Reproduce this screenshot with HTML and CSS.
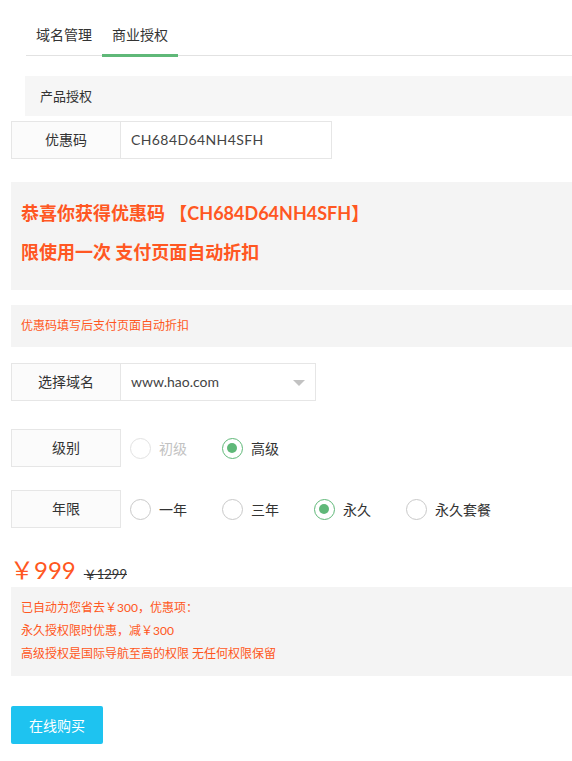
FILE: index.html
```html
<!DOCTYPE html>
<html lang="zh-CN">
<head>
    <meta charset="UTF-8">
    <title>商业授权</title>
    <link rel="stylesheet" href="styles.css">
</head>
<body>
    <ul class="tab-title">
        <li>域名管理</li>
        <li class="this">商业授权</li>
    </ul>

    <div class="panel-head">产品授权</div>

    <div class="form-item first">
        <label class="form-label">优惠码</label>
        <div class="form-input code-input">CH684D64NH4SFH</div>
    </div>

    <div class="coupon-box">
        <p>恭喜你获得优惠码 【CH684D64NH4SFH】</p>
        <p>限使用一次 支付页面自动折扣</p>
    </div>

    <div class="tip-box">优惠码填写后支付页面自动折扣</div>

    <div class="form-item domain">
        <label class="form-label">选择域名</label>
        <div class="form-input select-input">
            <span>www.hao.com</span>
            <i class="edge"></i>
        </div>
    </div>

    <div class="form-item level">
        <label class="form-label">级别</label>
        <div class="radio-group">
            <div class="radio disabled"><i></i><span>初级</span></div>
            <div class="radio checked"><i></i><span>高级</span></div>
        </div>
    </div>

    <div class="form-item years">
        <label class="form-label">年限</label>
        <div class="radio-group">
            <div class="radio"><i></i><span>一年</span></div>
            <div class="radio"><i></i><span>三年</span></div>
            <div class="radio checked"><i></i><span>永久</span></div>
            <div class="radio"><i></i><span>永久套餐</span></div>
        </div>
    </div>

    <div class="price-row">
        <span class="price">￥999</span>
        <del class="old-price">￥1299</del>
    </div>

    <div class="note-box">
        <p>已自动为您省去￥300，优惠项：</p>
        <p>永久授权限时优惠，减￥300</p>
        <p>高级授权是国际导航至高的权限 无任何权限保留</p>
    </div>

    <button class="buy-btn">在线购买</button>
</body>
</html>
```

FILE: styles.css
```css
body {
    margin: 0;
    padding: 0 0 20px 11px;
    font-family: 'Lato', 'Noto Sans CJK SC', sans-serif;
    font-size: 14px;
    color: #333;
    background-color: #fff;
}

p {
    margin: 0;
}

/* onglets */
.tab-title {
    display: flex;
    list-style: none;
    margin: 15px 0 0 15px;
    padding: 0;
    height: 40px;
    border-bottom: 1px solid #e2e2e2;
}

.tab-title li {
    position: relative;
    padding: 0 10px;
    line-height: 40px;
    color: #333;
}

.tab-title li.this::after {
    content: '';
    position: absolute;
    left: 0;
    right: 0;
    bottom: -2px;
    height: 3px;
    background-color: #5fb878;
}

.panel-head {
    margin: 20px 0 0 14px;
    height: 40px;
    line-height: 40px;
    padding-left: 15px;
    background-color: #f6f6f6;
    font-size: 13px;
}

/* formulaire */
.form-item {
    display: flex;
    height: 38px;
}

.form-item.first { margin-top: 5px; }
.form-item.domain { margin-top: 16px; }
.form-item.level { margin-top: 28px; }
.form-item.years { margin-top: 23px; }

.form-label {
    box-sizing: border-box;
    width: 110px;
    height: 38px;
    line-height: 36px;
    text-align: center;
    background-color: #fbfbfb;
    border: 1px solid #e6e6e6;
}

.form-input {
    box-sizing: border-box;
    height: 38px;
    line-height: 36px;
    padding-left: 10px;
    border: 1px solid #e6e6e6;
    border-left: none;
    color: #444;
}

.code-input {
    width: 211px;
    letter-spacing: 0.4px;
}

.select-input {
    position: relative;
    width: 195px;
}

.select-input .edge {
    position: absolute;
    right: 10px;
    top: 16px;
    border: 6px solid transparent;
    border-top-color: #c2c2c2;
}

.radio-group {
    display: flex;
    align-items: center;
    padding-left: 9px;
}

.radio {
    display: flex;
    align-items: center;
    margin-right: 35px;
}

.radio i {
    box-sizing: border-box;
    position: relative;
    width: 21px;
    height: 21px;
    border: 1.5px solid #c9c9c9;
    border-radius: 50%;
    margin-right: 8px;
}

.radio.checked i {
    border-color: #5fb878;
}

.radio.checked i::after {
    content: '';
    position: absolute;
    left: 4px;
    top: 4px;
    width: 10px;
    height: 10px;
    border-radius: 50%;
    background-color: #5fb878;
}

.radio.disabled i { border-color: #e2e2e2; }
.radio.disabled span { color: #c2c2c2; }

/* messages */
.coupon-box {
    margin-top: 23px;
    padding: 12px 10px 18px;
    background-color: #f4f4f4;
    color: #ff5722;
    font-size: 18px;
    font-weight: bold;
    line-height: 39px;
}

.tip-box {
    margin-top: 15px;
    height: 42px;
    line-height: 42px;
    padding-left: 10px;
    background-color: #f4f4f4;
    color: #ff5722;
    font-size: 12px;
}

.price-row {
    display: flex;
    align-items: baseline;
    margin-top: 19px;
    height: 40px;
    line-height: 46px;
}

.price {
    font-size: 24px;
    color: #ff5722;
    margin-left: -1px;
    margin-right: 8px;
}

.old-price {
    font-size: 13px;
    color: #333;
}

.note-box {
    padding: 9px 10px 11px;
    background-color: #f4f4f4;
    color: #ff5722;
    font-size: 12px;
    line-height: 23px;
}

.buy-btn {
    display: block;
    margin-top: 30px;
    height: 38px;
    padding: 0 18px;
    border: none;
    border-radius: 2px;
    background-color: #1ec3f0;
    color: #fff;
    font-family: inherit;
    font-size: 14px;
    cursor: pointer;
}
```
